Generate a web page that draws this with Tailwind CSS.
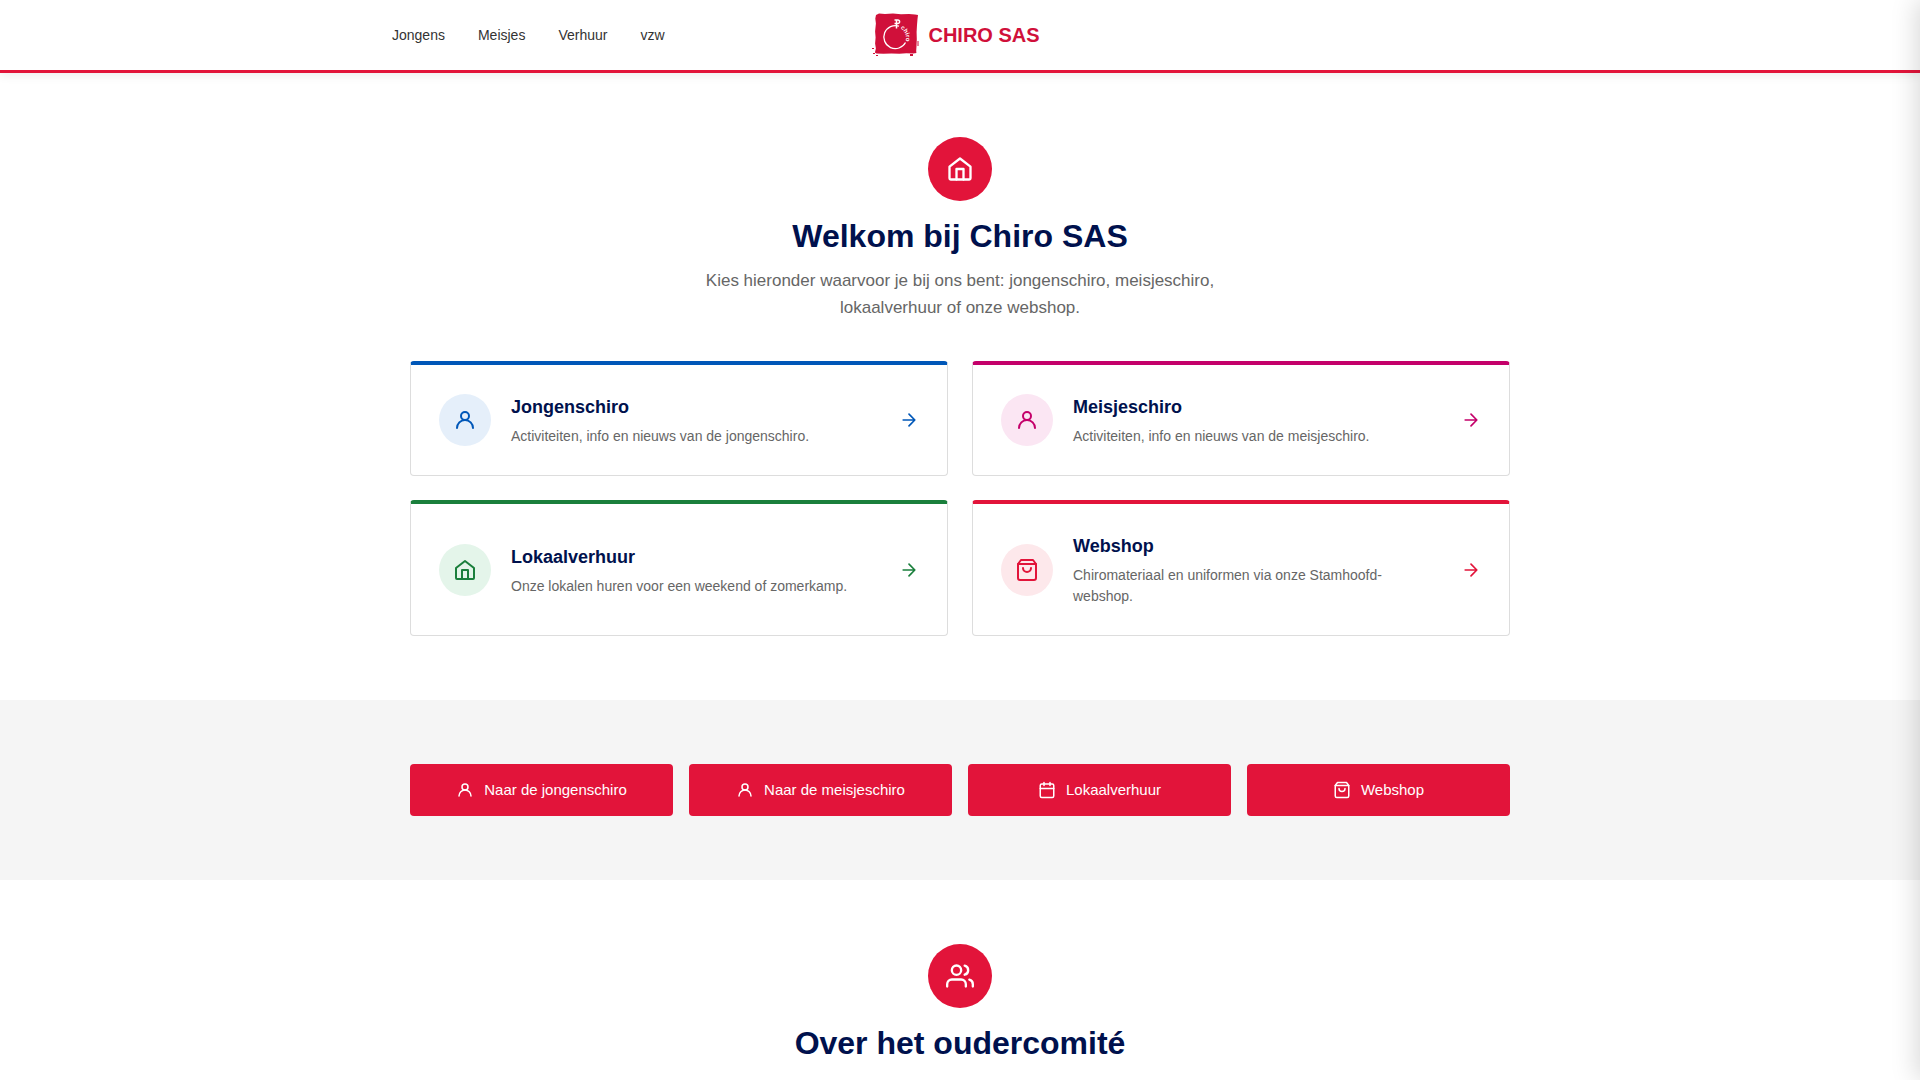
<!DOCTYPE html>
<html lang="nl">

<head>
  <meta charset="UTF-8">
  <meta name="viewport" content="width=device-width, initial-scale=1.0">
  <title>Chiro SAS</title>
  <script src="https://cdn.jsdelivr.net/npm/@tailwindcss/browser@4"></script>
</head>

<body class="bg-white font-['Liberation_Sans',Arial,sans-serif] text-[#333333] overflow-x-hidden">
  <!-- Icon sprite -->
  <svg class="hidden" aria-hidden="true">
    <symbol id="icon-home" viewBox="0 0 24 24">
      <path d="M3 10l9-7 9 7v10a1 1 0 0 1-1 1H4a1 1 0 0 1-1-1z" />
      <path d="M9 21v-9h6v9" />
    </symbol>
    <symbol id="icon-user" viewBox="0 0 24 24">
      <circle cx="12" cy="8" r="4" />
      <path d="M4 20a8 8 0 0 1 16 0" />
    </symbol>
    <symbol id="icon-users" viewBox="0 0 24 24">
      <circle cx="9" cy="7" r="4" />
      <path d="M17 21v-2a4 4 0 0 0-4-4H5a4 4 0 0 0-4 4v2" />
      <path d="M23 21v-2a4 4 0 0 0-3-3.87" />
      <path d="M16 3.13a4 4 0 0 1 0 7.75" />
    </symbol>
    <symbol id="icon-bag" viewBox="0 0 24 24">
      <path d="M6 2L3 6v14a2 2 0 0 0 2 2h14a2 2 0 0 0 2-2V6l-3-4z" />
      <path d="M3 6h18" />
      <path d="M16 10a4 4 0 0 1-8 0" />
    </symbol>
    <symbol id="icon-calendar" viewBox="0 0 24 24">
      <rect x="3" y="4" width="18" height="18" rx="2" />
      <path d="M16 2v4M8 2v4M3 10h18" />
    </symbol>
    <symbol id="icon-arrow" viewBox="0 0 24 24">
      <path d="M5 12h14M12 5l7 7-7 7" />
    </symbol>
  </svg>

  <!-- Header -->
  <header class="relative bg-white border-b-3 border-[#e2143a] shadow-[0_2px_10px_rgba(0,0,0,0.08)]">
    <div class="max-w-[1200px] mx-auto px-8 h-[70px] grid grid-cols-[1fr_auto_1fr] items-center">
      <nav class="flex gap-[33px] text-sm">
        <a href="#jongens">Jongens</a>
        <a href="#meisjes">Meisjes</a>
        <a href="#verhuur">Verhuur</a>
        <a href="#vzw">vzw</a>
      </nav>
      <a href="#" class="flex items-center gap-2 pr-2 text-[#d0103a]">
        <svg class="w-12 h-12" viewBox="0 0 48 48" fill="none" aria-hidden="true">
          <path fill="currentColor" d="M4 4l3-1.5 6 .5 8-.5 8 .8 8-.3 6 .5 3 .5-.5 4-.5 6-.4 7 .2 7-.3 7-.3 5 .2 2-3 .5-7-.3-7 .6-8-.3-8 .3-7-.2-1.500-1 1-4-.8-5 .5-6-.5-6 .8-8-.6-5z" />
          <path fill="currentColor" d="M0 37h2v1H0zM1 42h2v1H1zM4 44h2v1H4zM38 43h3v2h-3zM45.500 30h1v5h-1z" />
          <path stroke="#fff" stroke-width="1.300" d="M27 15.200a11.500 11.500 0 1 0 6.500 16.300" />
          <path stroke="#fff" stroke-width="1.500" d="M24.500 17.500V9h1.300a1.700 1.700 0 0 1 0 3.600H22.500M22.500 9h2" />
          <path id="logo-arc" d="M28.500 17.500a10.500 10.500 0 0 1 4.500 14" />
          <text fill="#fff" font-size="6" font-weight="bold" font-family="Liberation Sans, sans-serif"><textPath href="#logo-arc">chiro</textPath></text>
        </svg>
        <span class="font-bold text-xl">CHIRO SAS</span>
      </a>
    </div>
  </header>

  <main>
    <!-- Welcome -->
    <section class="py-16 px-8">
      <div class="max-w-[1100px] mx-auto">
        <div class="flex flex-col items-center text-center mb-10">
          <div class="size-16 rounded-full bg-[#e2143a] text-white flex items-center justify-center mb-4">
            <svg class="size-7 fill-none stroke-current stroke-2" stroke-linecap="round" stroke-linejoin="round"><use href="#icon-home" /></svg>
          </div>
          <h1 class="text-[32px] leading-[38px] font-bold text-[#00114d] mb-3">Welkom bij Chiro SAS</h1>
          <p class="text-[17px] leading-[27px] text-[#666666] max-w-[560px]">Kies hieronder waarvoor je bij ons bent: jongenschiro, meisjeschiro, lokaalverhuur of onze webshop.</p>
        </div>

        <div class="grid grid-cols-2 gap-6">
          <a href="#jongens" class="flex items-center gap-5 p-7 border border-t-4 border-[#dddddd] border-t-[#0057b8] rounded">
            <span class="size-[52px] shrink-0 rounded-full bg-[#e5effa] text-[#0057b8] flex items-center justify-center">
              <svg class="size-6 fill-none stroke-current stroke-2" stroke-linecap="round" stroke-linejoin="round"><use href="#icon-user" /></svg>
            </span>
            <span class="flex-1">
              <strong class="block text-lg leading-7 mb-[5px] text-[#00114d]">Jongenschiro</strong>
              <span class="block text-sm leading-[21px] text-[#666666]">Activiteiten, info en nieuws van de jongenschiro.</span>
            </span>
            <svg class="size-5 shrink-0 fill-none stroke-[#0057b8] stroke-2" stroke-linecap="round" stroke-linejoin="round"><use href="#icon-arrow" /></svg>
          </a>

          <a href="#meisjes" class="flex items-center gap-5 p-7 border border-t-4 border-[#dddddd] border-t-[#c4006a] rounded">
            <span class="size-[52px] shrink-0 rounded-full bg-[#fbe6f3] text-[#c4006a] flex items-center justify-center">
              <svg class="size-6 fill-none stroke-current stroke-2" stroke-linecap="round" stroke-linejoin="round"><use href="#icon-user" /></svg>
            </span>
            <span class="flex-1">
              <strong class="block text-lg leading-7 mb-[5px] text-[#00114d]">Meisjeschiro</strong>
              <span class="block text-sm leading-[21px] text-[#666666]">Activiteiten, info en nieuws van de meisjeschiro.</span>
            </span>
            <svg class="size-5 shrink-0 fill-none stroke-[#c4006a] stroke-2" stroke-linecap="round" stroke-linejoin="round"><use href="#icon-arrow" /></svg>
          </a>

          <a href="#verhuur" class="flex items-center gap-5 p-7 border border-t-4 border-[#dddddd] border-t-[#1a7f3c] rounded">
            <span class="size-[52px] shrink-0 rounded-full bg-[#e4f5ea] text-[#1a7f3c] flex items-center justify-center">
              <svg class="size-6 fill-none stroke-current stroke-2" stroke-linecap="round" stroke-linejoin="round"><use href="#icon-home" /></svg>
            </span>
            <span class="flex-1">
              <strong class="block text-lg leading-7 mb-[5px] text-[#00114d]">Lokaalverhuur</strong>
              <span class="block text-sm leading-[21px] text-[#666666]">Onze lokalen huren voor een weekend of zomerkamp.</span>
            </span>
            <svg class="size-5 shrink-0 fill-none stroke-[#1a7f3c] stroke-2" stroke-linecap="round" stroke-linejoin="round"><use href="#icon-arrow" /></svg>
          </a>

          <a href="#webshop" class="flex items-center gap-5 p-7 border border-t-4 border-[#dddddd] border-t-[#e2143a] rounded">
            <span class="size-[52px] shrink-0 rounded-full bg-[#fde8eb] text-[#e2143a] flex items-center justify-center">
              <svg class="size-6 fill-none stroke-current stroke-2" stroke-linecap="round" stroke-linejoin="round"><use href="#icon-bag" /></svg>
            </span>
            <span class="flex-1">
              <strong class="block text-lg leading-7 mb-[5px] text-[#00114d]">Webshop</strong>
              <span class="block text-sm leading-[21px] text-[#666666]">Chiromateriaal en uniformen via onze Stamhoofd-webshop.</span>
            </span>
            <svg class="size-5 shrink-0 fill-none stroke-[#e2143a] stroke-2" stroke-linecap="round" stroke-linejoin="round"><use href="#icon-arrow" /></svg>
          </a>
        </div>
      </div>
    </section>

    <!-- Quick links -->
    <section class="bg-[#f5f5f5] py-16 px-8">
      <div class="max-w-[1100px] mx-auto grid grid-cols-4 gap-4 text-[15px] text-white">
        <a href="#jongens" class="h-[52px] flex items-center justify-center gap-2.5 rounded bg-[#e2143a]">
          <svg class="size-[18px] fill-none stroke-current stroke-2" stroke-linecap="round" stroke-linejoin="round"><use href="#icon-user" /></svg>
          Naar de jongenschiro
        </a>
        <a href="#meisjes" class="h-[52px] flex items-center justify-center gap-2.5 rounded bg-[#e2143a]">
          <svg class="size-[18px] fill-none stroke-current stroke-2" stroke-linecap="round" stroke-linejoin="round"><use href="#icon-user" /></svg>
          Naar de meisjeschiro
        </a>
        <a href="#verhuur" class="h-[52px] flex items-center justify-center gap-2.5 rounded bg-[#e2143a]">
          <svg class="size-[18px] fill-none stroke-current stroke-2" stroke-linecap="round" stroke-linejoin="round"><use href="#icon-calendar" /></svg>
          Lokaalverhuur
        </a>
        <a href="#webshop" class="h-[52px] flex items-center justify-center gap-2.5 rounded bg-[#e2143a]">
          <svg class="size-[18px] fill-none stroke-current stroke-2" stroke-linecap="round" stroke-linejoin="round"><use href="#icon-bag" /></svg>
          Webshop
        </a>
      </div>
    </section>

    <!-- About -->
    <section class="pt-16 px-8 flex flex-col items-center text-center">
      <div class="size-16 rounded-full bg-[#e2143a] text-white flex items-center justify-center mb-4">
        <svg class="size-7 fill-none stroke-current stroke-2" stroke-linecap="round" stroke-linejoin="round"><use href="#icon-users" /></svg>
      </div>
      <h2 class="text-[32px] leading-[38px] font-bold text-[#00114d]">Over het oudercomité</h2>
    </section>
  </main>

  <!-- Closed side menu, only its shadow reaches the page -->
  <aside class="fixed inset-y-0 left-full w-80 bg-white shadow-[-4px_0_24px_rgba(0,0,0,0.15)]"></aside>
</body>

</html>
